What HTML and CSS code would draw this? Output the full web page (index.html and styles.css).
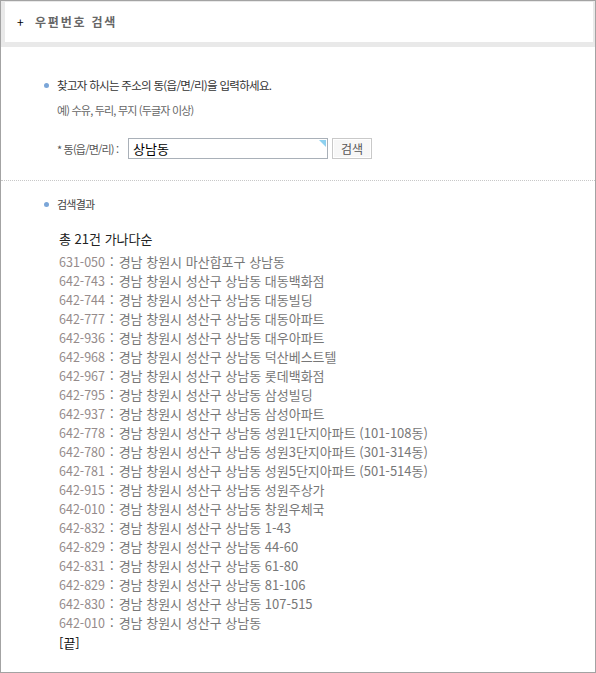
FILE: index.html
```html
<!DOCTYPE html>
<html lang="ko">
<head>
<meta charset="utf-8">
<title>우편번호 검색</title>
<link rel="stylesheet" href="styles.css">
</head>
<body>
<div class="wrap">
  <div class="hd"><span class="plus">+</span><h1 class="title">우편번호 검색</h1></div>
  <div class="sec sec-form">
    <p class="lead"><i class="dot"></i>찾고자 하시는 주소의 동(읍/면/리)을 입력하세요.</p>
    <p class="ex">예) 수유, 두리, 무지 (두글자 이상)</p>
    <div class="row">
      <label class="lbl">* 동(읍/면/리) :</label>
      <div class="input">상남동<span class="tri"></span></div>
      <button class="btn" type="button">검색</button>
    </div>
  </div>
  <div class="sec sec-result">
    <p class="lead lead-sm"><i class="dot"></i>검색결과</p>
    <p class="total">총 21건 가나다순</p>
    <ul class="list">
      <li><span class="code">631-050</span><b>:</b>경남 창원시 마산합포구 상남동</li>
      <li><span class="code">642-743</span><b>:</b>경남 창원시 성산구 상남동 대동백화점</li>
      <li><span class="code">642-744</span><b>:</b>경남 창원시 성산구 상남동 대동빌딩</li>
      <li><span class="code">642-777</span><b>:</b>경남 창원시 성산구 상남동 대동아파트</li>
      <li><span class="code">642-936</span><b>:</b>경남 창원시 성산구 상남동 대우아파트</li>
      <li><span class="code">642-968</span><b>:</b>경남 창원시 성산구 상남동 덕산베스트텔</li>
      <li><span class="code">642-967</span><b>:</b>경남 창원시 성산구 상남동 롯데백화점</li>
      <li><span class="code">642-795</span><b>:</b>경남 창원시 성산구 상남동 삼성빌딩</li>
      <li><span class="code">642-937</span><b>:</b>경남 창원시 성산구 상남동 삼성아파트</li>
      <li><span class="code">642-778</span><b>:</b>경남 창원시 성산구 상남동 성원1단지아파트 (101-108동)</li>
      <li><span class="code">642-780</span><b>:</b>경남 창원시 성산구 상남동 성원3단지아파트 (301-314동)</li>
      <li><span class="code">642-781</span><b>:</b>경남 창원시 성산구 상남동 성원5단지아파트 (501-514동)</li>
      <li><span class="code">642-915</span><b>:</b>경남 창원시 성산구 상남동 성원주상가</li>
      <li><span class="code">642-010</span><b>:</b>경남 창원시 성산구 상남동 창원우체국</li>
      <li><span class="code">642-832</span><b>:</b>경남 창원시 성산구 상남동 1-43</li>
      <li><span class="code">642-829</span><b>:</b>경남 창원시 성산구 상남동 44-60</li>
      <li><span class="code">642-831</span><b>:</b>경남 창원시 성산구 상남동 61-80</li>
      <li><span class="code">642-829</span><b>:</b>경남 창원시 성산구 상남동 81-106</li>
      <li><span class="code">642-830</span><b>:</b>경남 창원시 성산구 상남동 107-515</li>
      <li><span class="code">642-010</span><b>:</b>경남 창원시 성산구 상남동</li>
    </ul>
    <p class="end">[끝]</p>
  </div>
</div>
</body>
</html>
```
FILE: styles.css
```css
* { box-sizing: border-box; }
html, body { margin: 0; padding: 0; background: #fff; }
body {
  font-family: "Noto Sans CJK KR", "Noto Sans", sans-serif;
  color: #333;
}
p, h1, ul { margin: 0; padding: 0; }

.wrap {
  width: 596px;
  height: 673px;
  border: 1px solid #a3a3a3;
  overflow: hidden;
}

.hd {
  height: 46px;
  border-style: solid;
  border-color: #e9e9e9;
  border-width: 1px 2px 5px 4px;
  display: flex;
  align-items: center;
  padding: 0 0 1px 12px;
  background: #fff;
}
.plus {
  width: 18px;
  font-size: 12px;
  color: #000;
  line-height: 12px;
}
.title {
  font-size: 12px;
  font-weight: bold;
  color: #666;
  letter-spacing: 1.8px;
  line-height: 16px;
}

.sec-form {
  padding: 30px 0 21px 43px;
}
.lead {
  font-size: 11.5px;
  line-height: 16px;
  letter-spacing: -0.7px;
  color: #333;
  display: flex;
  align-items: center;
}
.lead-sm {
  font-size: 11px;
  letter-spacing: -0.8px;
  color: #444;
}
.dot {
  display: inline-block;
  width: 5px;
  height: 5px;
  border-radius: 50%;
  background: #7ba6d8;
  margin-right: 8px;
}
.ex {
  margin: 9px 0 0 13px;
  font-size: 11px;
  line-height: 16px;
  letter-spacing: -0.8px;
  color: #666;
}
.row {
  margin: 20px 0 0 13px;
  display: flex;
  align-items: center;
  height: 21px;
}
.lbl {
  width: 71px;
  font-size: 11px;
  letter-spacing: -0.8px;
  color: #555;
}
.input {
  position: relative;
  width: 200px;
  height: 21px;
  border: 1px solid #a9b0b8;
  font-size: 13px;
  line-height: 19px;
  padding-left: 4px;
  color: #000;
}
.tri {
  position: absolute;
  top: 1px;
  right: 1px;
  width: 0;
  height: 0;
  border-top: 7px solid #8ed1f0;
  border-left: 7px solid transparent;
}
.btn {
  margin-left: 4px;
  width: 40px;
  height: 21px;
  border: 1px solid #c9c9c9;
  box-shadow: inset 0 0 0 1px #fff;
  background: #f7f7f7;
  font-family: inherit;
  font-size: 12px;
  color: #555;
  padding: 0;
  line-height: 17px;
}

.sec-result {
  border-top: 1px dotted #c8c8c8;
  padding: 15px 0 0 43px;
}
.total {
  margin: 17px 0 0 15px;
  font-size: 13px;
  line-height: 19px;
  color: #222;
}
.list {
  list-style: none;
  margin: 4px 0 0 15px;
  font-size: 13px;
  line-height: 19px;
  color: #777;
}
.code {
  color: #958b8b;
  font-size: 12.5px;
}
.list b {
  font-weight: normal;
  color: #555;
  margin: 0 5px 0 5px;
}
.end {
  margin: 1px 0 0 15px;
  font-size: 13px;
  line-height: 19px;
  color: #111;
}
```
